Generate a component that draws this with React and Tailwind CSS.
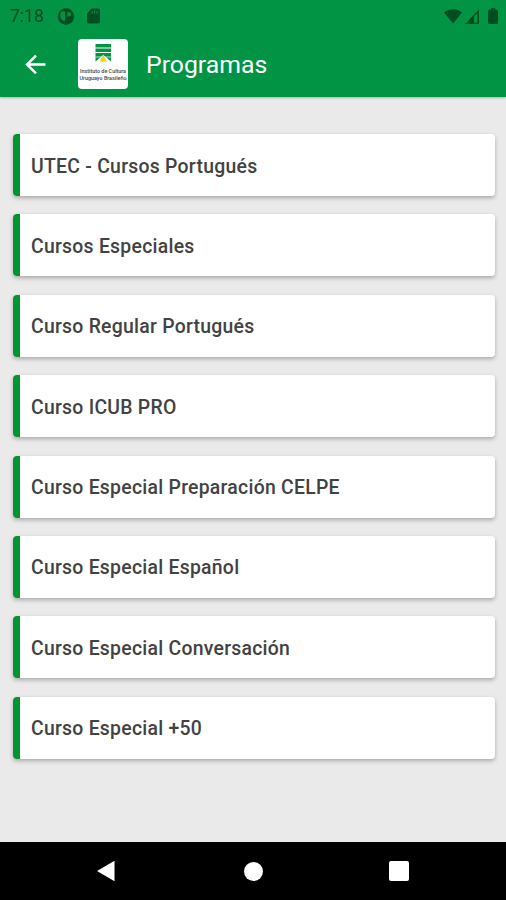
import React from 'react'

const programs = [
  { id: 1, name: 'UTEC - Cursos Portugués' },
  { id: 2, name: 'Cursos Especiales' },
  { id: 3, name: 'Curso Regular Portugués' },
  { id: 4, name: 'Curso ICUB PRO' },
  { id: 5, name: 'Curso Especial Preparación CELPE' },
  { id: 6, name: 'Curso Especial Español' },
  { id: 7, name: 'Curso Especial Conversación' },
  { id: 8, name: 'Curso Especial +50' },
];

const StatusBar = () => (
  <div className="flex h-8 items-center justify-between pl-[10px] pr-2 text-[#024d20]">
    <div className="flex items-center">
      <span className="w-[47px] text-[17.5px] leading-8">7:18</span>
      <svg className="h-[17px] w-[18px]" viewBox="0 0 18 17">
        <circle cx="9" cy="8.5" r="8.2" fill="currentColor" />
        <path d="M4.500 3.500H8v9.500A5 5 0 0 1 3.500 8.500V4.500z" fill="#009444" />
        <path d="M10.500 4h1.200a2.200 2.200 0 0 1 0 4.400h-1.200z" fill="#009444" />
      </svg>
      <svg className="ml-3 h-4 w-[13px]" viewBox="0 0 13 16">
        <path d="M5 .500h6.500A1.500 1.500 0 0 1 13 2v12a1.500 1.500 0 0 1-1.500 1.500h-10A1.500 1.500 0 0 1 0 14V5.500z" fill="currentColor" />
        <path d="M5 3v3M7.500 3v3M10 3v3" stroke="#009444" strokeWidth="1" />
      </svg>
    </div>
    <div className="flex items-center">
      <svg className="h-[15px] w-[18px]" viewBox="0 0 18 15">
        <path d="M0 3.500C5-.700 13-.700 18 3.500L9 14.500z" fill="currentColor" />
      </svg>
      <svg className="ml-[3px] h-[15px] w-[14px]" viewBox="0 0 14 15">
        <path d="M0 15 14 .500V15z" fill="currentColor" />
        <path d="M9 7.500 12.400 4v9.500H9z" fill="#009444" />
      </svg>
      <svg className="ml-[9px] h-4 w-[10px]" viewBox="0 0 10 16">
        <path d="M3 0h4v1.500h1.500L10 3v11.500a1.500 1.500 0 0 1-1.500 1.500h-7A1.500 1.500 0 0 1 0 14.500V3l1.500-1.500H3z" fill="currentColor" />
      </svg>
    </div>
  </div>
);

const Logo = () => (
  <svg className="ml-8 h-[50px] w-[50px] rounded-[4px] bg-white" viewBox="0 0 50 50">
    <path d="M17.500 5h15.500v3.500H17.500zM17.500 9.500h15.500v3.500H17.500zM17.500 14h15.500v8.500L29 19l-3.700-3-3.800 3-4 3.500z" fill="#009444" />
    <path d="M17.500 18h15.500" stroke="#fff" strokeWidth=".7" />
    <path d="M25.200 15.500 28.800 22.700H21.700z" fill="#f9cf1b" />
    <g fill="#444" fontFamily="Roboto, sans-serif" fontSize="5.200" fontWeight="500">
      <text x="2" y="34" textLength="46" lengthAdjust="spacingAndGlyphs">Instituto de Cultura</text>
      <text x="1.500" y="40.500" textLength="47" lengthAdjust="spacingAndGlyphs">Uruguayo Brasileño</text>
    </g>
  </svg>
);

const Header = () => (
  <header className="h-[97px] bg-[#009444] shadow-[0_1px_2px_rgba(0,0,0,0.25)]">
    <StatusBar />
    <div className="flex h-[64px] items-center pl-[25px]">
      <svg className="h-[20px] w-[21px]" viewBox="0 0 21 20" fill="none" stroke="#fff" strokeWidth="2.500">
        <path d="M20.500 10.500H2.500M11 1.700 2 10.500l9 8.800" />
      </svg>
      <Logo />
      <h1 className="ml-[18px] pt-[2px] text-[24.8px] leading-8 text-white">Programas</h1>
    </div>
  </header>
);

const NavBar = () => (
  <nav className="flex h-[58px] items-center justify-between bg-black pl-24 pr-[97px]">
    <svg className="h-[22px] w-[21px]" viewBox="0 0 21 22">
      <path d="M1 11 18.500.800v20.400z" fill="#fff" />
    </svg>
    <span className="h-[19px] w-[19px] rounded-full bg-white" />
    <span className="h-5 w-5 rounded-[2px] bg-white" />
  </nav>
);

const App = () => {
  return (
    <div className="flex h-[900px] w-[506px] flex-col bg-[#eaeaea] font-['Roboto',sans-serif]">
      <Header />
      <main className="flex flex-1 flex-col gap-[18.4px] pl-[13px] pr-[11px] pt-[37px]">
        {programs.map((program) => (
          <div
            key={program.id}
            className="flex h-[62px] items-center overflow-hidden rounded-[4px] bg-white shadow-[0_2px_4px_rgba(0,0,0,0.28)]"
          >
            <span className="h-full w-[7px] bg-[#009432]" />
            <span className="ml-[11px] pt-[3px] text-[19.4px] font-medium leading-6 tracking-[0.26px] text-[#424242]">
              {program.name}
            </span>
          </div>
        ))}
      </main>
      <NavBar />
    </div>
  )
}

export default App
